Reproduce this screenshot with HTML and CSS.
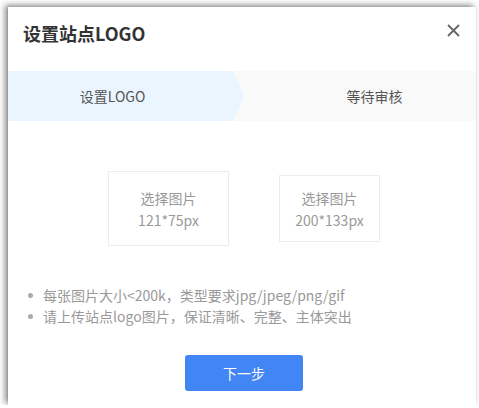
FILE: index.html
```html
<!DOCTYPE html>
<html lang="zh">
<head>
<meta charset="utf-8">
<title>设置站点LOGO</title>
<link rel="stylesheet" href="styles.css">
</head>
<body>
<div class="dialog">
  <div class="header">
    <h1 class="title">设置站点LOGO</h1>
    <button class="close" aria-label="关闭">
      <svg width="13" height="13" viewBox="0 0 13 13"><path d="M1 1 L12 12 M12 1 L1 12" stroke="#666" stroke-width="1.8" fill="none"/></svg>
    </button>
  </div>
  <div class="steps">
    <div class="step active">设置LOGO</div>
    <div class="step next">等待审核</div>
  </div>
  <div class="boxes">
    <div class="pick pick-lg">选择图片<br>121*75px</div>
    <div class="pick pick-sm">选择图片<br>200*133px</div>
  </div>
  <ul class="tips">
    <li>每张图片大小&lt;200k，类型要求jpg/jpeg/png/gif</li>
    <li>请上传站点logo图片，保证清晰、完整、主体突出</li>
  </ul>
  <div class="actions">
    <button class="btn">下一步</button>
  </div>
</div>
</body>
</html>
```
FILE: styles.css
```css
html, body {
  margin: 0;
  padding: 0;
  background: #fff;
}
body {
  font-family: "Noto Sans CJK SC", "Noto Sans", sans-serif;
  padding: 7px 3px 0 8px;
}
.dialog {
  width: 468px;
  height: 398px;
  background: #fff;
  box-shadow: -3px -2px 6px rgba(0,0,0,0.45), 0 0 2px rgba(0,0,0,0.12);
  display: flex;
  flex-direction: column;
}
.header {
  height: 64px;
  display: flex;
  align-items: flex-start;
  justify-content: space-between;
  padding: 0 16px 0 15px;
  box-sizing: border-box;
}
.title {
  margin: 14px 0 0 0;
  font-size: 18px;
  line-height: 25px;
  font-weight: bold;
  color: #333;
}
.close {
  margin-top: 17px;
  padding: 0;
  border: 0;
  background: none;
  width: 13px;
  height: 13px;
  display: flex;
}
.steps {
  height: 50px;
  display: flex;
  background: #f9f9f9;
}
.step {
  font-size: 14px;
  color: #555;
  line-height: 50px;
  text-align: center;
  box-sizing: border-box;
}
.step.active {
  width: 236px;
  background: #ebf5ff;
  padding-right: 27px;
  clip-path: polygon(0 0, 225px 0, 100% 50%, 225px 100%, 0 100%);
}
.step.next {
  flex: 1;
  padding-left: 32px;
  margin-left: -3px;
}
.boxes {
  margin-top: 50px;
  height: 75px;
  display: flex;
  align-items: center;
  padding-left: 100px;
  gap: 50px;
}
.pick {
  box-sizing: border-box;
  border: 1px solid #ececec;
  display: flex;
  align-items: center;
  justify-content: center;
  text-align: center;
  font-size: 14px;
  line-height: 22px;
  color: #999;
}
.pick-lg {
  width: 121px;
  height: 75px;
}
.pick-sm {
  width: 101px;
  height: 67px;
}
.tips {
  list-style: none;
  margin: 39px 0 0 0;
  padding: 0 0 0 35px;
  font-size: 14px;
  line-height: 21px;
  color: #999;
}
.tips li {
  position: relative;
}
.tips li::before {
  content: "";
  position: absolute;
  left: -15px;
  top: 8px;
  width: 5px;
  height: 5px;
  border-radius: 50%;
  background: #aaa;
}
.actions {
  margin-top: 28px;
  display: flex;
  justify-content: center;
  padding-left: 4px;
}
.btn {
  width: 118px;
  height: 36px;
  border: 0;
  border-radius: 3px;
  background: #4285f4;
  color: #fff;
  font-family: inherit;
  font-size: 14px;
  padding: 0;
}
```
